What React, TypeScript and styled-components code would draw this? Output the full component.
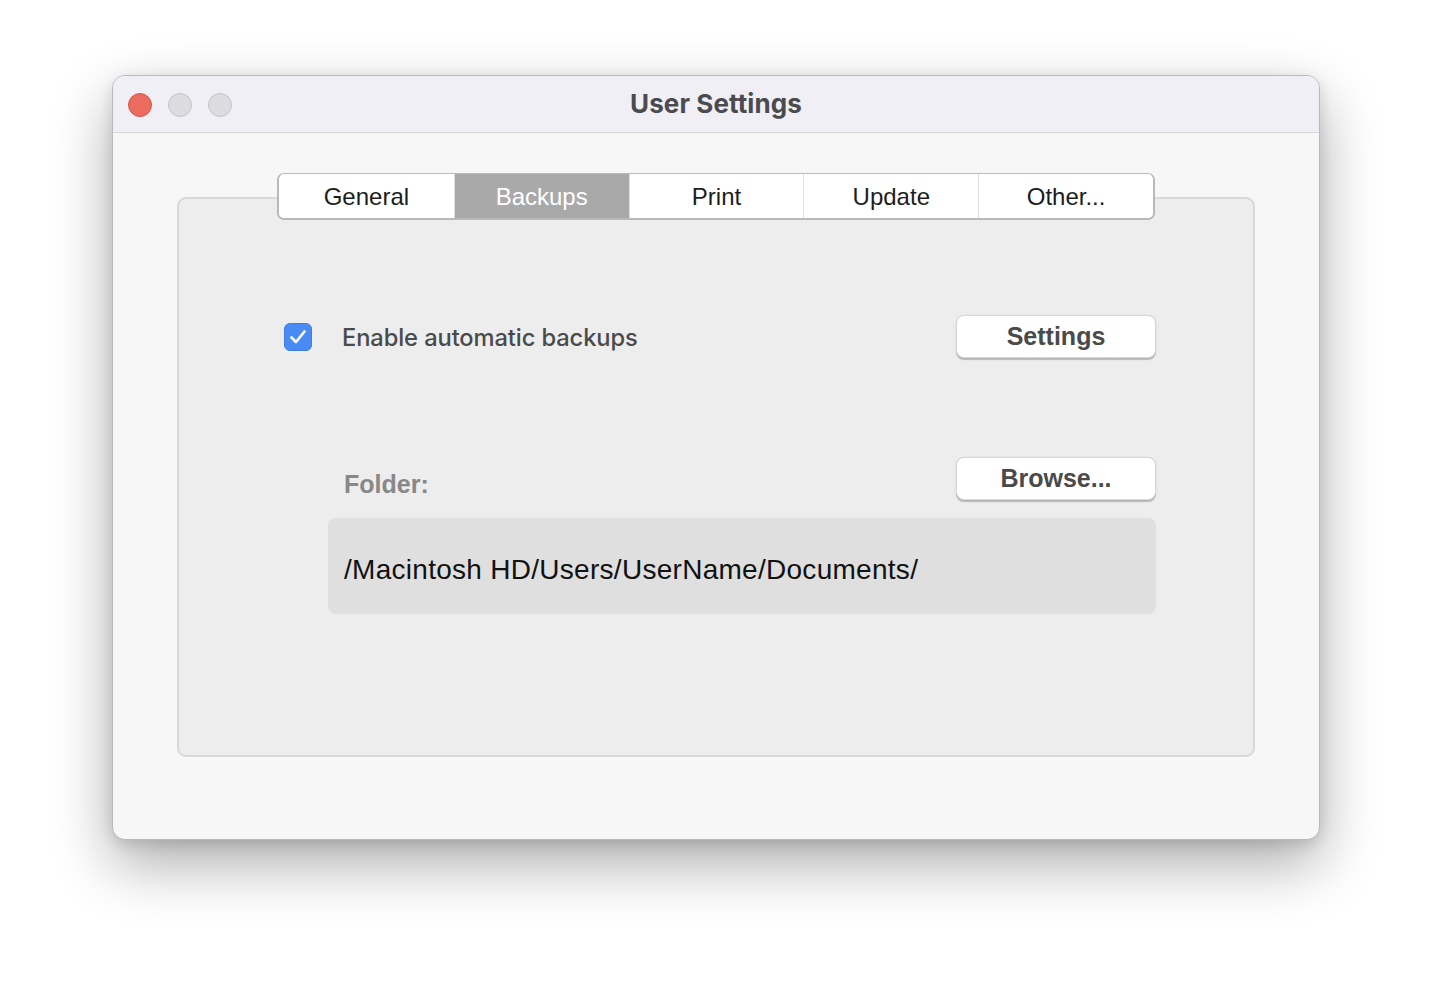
import React from "react";
import styled, { createGlobalStyle } from "styled-components";

const GlobalStyle = createGlobalStyle`
  html, body {
    margin: 0;
    padding: 0;
    background: #ffffff;
  }
  body {
    font-family: "Liberation Sans", Arial, sans-serif;
    -webkit-font-smoothing: antialiased;
  }
  #root {
    padding-top: 75px;
    height: 988px;
    box-sizing: border-box;
  }
`;

const Window = styled.div`
  width: 1208px;
  height: 765px;
  margin: 0 auto;
  box-sizing: border-box;
  border-radius: 13px;
  background: #f7f7f7;
  border: 1px solid #b9b9b9;
  box-shadow: 0 24px 60px rgba(0, 0, 0, 0.33), 0 4px 14px rgba(0, 0, 0, 0.12);
  overflow: hidden;
  display: flex;
  flex-direction: column;
`;

const TitleBar = styled.div`
  height: 56px;
  flex: 0 0 auto;
  background: #f0eff5;
  border-bottom: 1px solid #d6d6d8;
  display: grid;
  grid-template-columns: 200px 1fr 200px;
  align-items: center;
  padding: 0 15px;
`;

const Lights = styled.div`
  display: flex;
  gap: 16px;
  align-items: center;
  padding-top: 1px;
`;

const Light = styled.span<{ $color: string; $edge: string }>`
  width: 24px;
  height: 24px;
  border-radius: 50%;
  box-sizing: border-box;
  background: ${(p) => p.$color};
  border: 1px solid ${(p) => p.$edge};
`;

const Title = styled.div`
  text-align: center;
  font-family: Inter, "Noto Sans", sans-serif;
  font-weight: 700;
  font-size: 26px;
  color: #4b4b4f;
  letter-spacing: 0.1px;
  padding-bottom: 2px;
`;

const Body = styled.div`
  flex: 1;
  padding: 40px 64px 0 64px;
  display: flex;
  flex-direction: column;
  align-items: center;
`;

const TabBar = styled.div`
  position: relative;
  z-index: 1;
  width: 878px;
  height: 47px;
  box-sizing: border-box;
  display: grid;
  grid-template-columns: repeat(5, 1fr);
  background: #ffffff;
  border: 2px solid #b9b9b9;
  border-top-width: 1.5px;
  border-radius: 7px;
  overflow: hidden;
  margin-bottom: -23px;
`;

const Tab = styled.div<{ $active?: boolean; $first?: boolean }>`
  display: flex;
  align-items: center;
  justify-content: center;
  font-family: "Liberation Sans", Arial, sans-serif;
  font-size: 24px;
  color: ${(p) => (p.$active ? "#ffffff" : "#1d1d1d")};
  background: ${(p) => (p.$active ? "#a9a9a9" : "#ffffff")};
  border-left: ${(p) => (p.$first ? "none" : "1.5px solid #dedede")};
  padding-top: 1px;
`;

const Panel = styled.div`
  width: 1078px;
  height: 560px;
  box-sizing: border-box;
  background: #ededed;
  border: 2px solid #d8d8d8;
  border-radius: 9px;
  padding: 116px 97px 0 105px;
  display: flex;
  flex-direction: column;
`;

const OptionRow = styled.div`
  display: flex;
  align-items: center;
  height: 43px;
`;

const Check = styled.span`
  width: 28px;
  height: 28px;
  border-radius: 6px;
  background: #4a8af4;
  border: 1px solid #3c7de6;
  box-sizing: border-box;
  display: flex;
  align-items: center;
  justify-content: center;
  margin-right: 30px;
`;

const OptionLabel = styled.span`
  font-family: Inter, "Noto Sans", sans-serif;
  font-weight: 500;
  font-size: 23.7px;
  color: #4a4a4a;
  flex: 1;
  letter-spacing: -0.1px;
  padding-top: 1px;
`;

const PushButton = styled.button`
  width: 200px;
  height: 43px;
  border-radius: 8px;
  border: 1px solid #d9d9d9;
  background: #ffffff;
  box-shadow: 0 2px 1px rgba(0, 0, 0, 0.22), 0 0 0 0.5px rgba(0, 0, 0, 0.06);
  font-family: "Liberation Sans", Arial, sans-serif;
  font-weight: 700;
  font-size: 25px;
  color: #4a4a4a;
  padding: 0 0 1px;
  cursor: pointer;
`;

const FolderSection = styled.div`
  margin-left: 44px;
  margin-top: 99px;
  display: flex;
  flex-direction: column;
  gap: 18px;
`;

const FolderHeader = styled.div`
  display: flex;
  justify-content: space-between;
  align-items: flex-end;
  padding-left: 16px;
`;

const FolderLabel = styled.span`
  font-family: "Liberation Sans", Arial, sans-serif;
  font-weight: 700;
  font-size: 25px;
  color: #888888;
  margin-bottom: 1px;
`;

const PathField = styled.div`
  height: 96px;
  box-sizing: border-box;
  border-radius: 8px;
  background: #dfdfdf;
  display: flex;
  align-items: center;
  padding: 8px 0 0 16px;
  font-family: "Liberation Sans", Arial, sans-serif;
  font-size: 28px;
  letter-spacing: 0.28px;
  color: #111111;
`;

const tabs = ["General", "Backups", "Print", "Update", "Other..."];

export default function App() {
  return (
    <>
      <GlobalStyle />
      <Window>
        <TitleBar>
          <Lights>
            <Light $color="#ec6b5f" $edge="#d5584c" />
            <Light $color="#dcdbe0" $edge="#c4c3c9" />
            <Light $color="#dcdbe0" $edge="#c4c3c9" />
          </Lights>
          <Title>User Settings</Title>
          <div />
        </TitleBar>
        <Body>
          <TabBar>
            {tabs.map((t, i) => (
              <Tab key={t} $active={t === "Backups"} $first={i === 0}>
                {t}
              </Tab>
            ))}
          </TabBar>
          <Panel>
            <OptionRow>
              <Check>
                <svg width="18" height="16" viewBox="0 0 18 16" fill="none">
                  <path
                    d="M2.5 8.5 L7 13 L15.5 2.5"
                    stroke="#ffffff"
                    strokeWidth="2.6"
                    strokeLinecap="round"
                    strokeLinejoin="round"
                  />
                </svg>
              </Check>
              <OptionLabel>Enable automatic backups</OptionLabel>
              <PushButton>Settings</PushButton>
            </OptionRow>
            <FolderSection>
              <FolderHeader>
                <FolderLabel>Folder:</FolderLabel>
                <PushButton>Browse...</PushButton>
              </FolderHeader>
              <PathField>/Macintosh HD/Users/UserName/Documents/</PathField>
            </FolderSection>
          </Panel>
        </Body>
      </Window>
    </>
  );
}
